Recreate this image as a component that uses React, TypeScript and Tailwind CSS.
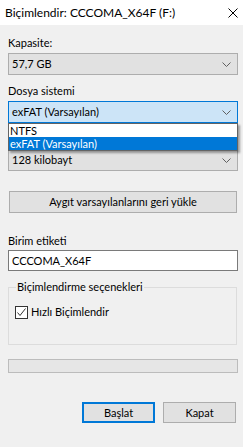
import React from "react";

const Chevron = () => (
  <svg width="9" height="5" viewBox="0 0 9 5" className="shrink-0">
    <path d="M0.5 0.5 L4.5 4.5 L8.5 0.5" fill="none" stroke="#606060" strokeWidth="1" />
  </svg>
);

const Combo = ({ text, active }: { text: string; active?: boolean }) => (
  <div
    className={
      active
        ? "h-[22px] flex items-center justify-between border border-[#0078d7] bg-[#cce4f7] pl-[3px] pr-[6px]"
        : "h-[22px] flex items-center justify-between border border-[#adadad] bg-[#e1e1e1] pl-[3px] pr-[6px]"
    }
  >
    <span className="leading-[14px]">{text}</span>
    <Chevron />
  </div>
);

export default function App() {
  return (
    <div className="w-[243px] h-[447px] bg-[#f0f0f0] text-[11px] text-black overflow-hidden font-[Lato,sans-serif]">
      <div className="h-[25px] bg-white flex items-center justify-between pl-[5px] pr-[5px] text-[12px]">
        <span className="leading-[16px]">Biçimlendir: CCCOMA_X64F (F:)</span>
        <svg width="10" height="10" viewBox="0 0 10 10">
          <path d="M0.5 0.5 L9.5 9.5 M9.5 0.5 L0.5 9.5" stroke="#000" strokeWidth="1" />
        </svg>
      </div>
      <div className="flex flex-col pl-[8px] pr-[5px]">
        <div className="mt-[10px] leading-[16px] h-[16px]">Kapasite:</div>
        <div className="mt-[2px]">
          <Combo text="57,7 GB" />
        </div>
        <div className="mt-[8px] leading-[16px] h-[16px]">Dosya sistemi</div>
        <div className="mt-[2px] relative">
          <Combo text="exFAT (Varsayılan)" active />
          <div className="absolute left-0 right-0 top-[22px] z-10 bg-white border border-[#646464] shadow-[2px_2px_2px_rgba(0,0,0,0.35)]">
            <div className="h-[13px] leading-[13px] pl-[1px]">NTFS</div>
            <div className="h-[13px] leading-[13px] pl-[1px] bg-[#0078d7] text-white">exFAT (Varsayılan)</div>
          </div>
        </div>
        <div className="mt-[8px] h-[16px]" />
        <div className="mt-[2px]">
          <Combo text="128 kilobayt" />
        </div>
        <div className="mt-[20px] ml-[1px] mr-[1px] h-[22px] border border-[#adadad] bg-[#e1e1e1] flex items-center justify-center">
          <span className="leading-[14px]">Aygıt varsayılanlarını geri yükle</span>
        </div>
        <div className="mt-[20px] leading-[16px] h-[16px]">Birim etiketi</div>
        <div className="mt-[1px] h-[21px] border border-[#7a7a7a] bg-white flex items-center pl-[3px]">
          <span className="leading-[14px]">CCCOMA_X64F</span>
        </div>
        <div className="mt-[16px] mr-[1px] h-[58px] border border-[#dcdcdc] relative">
          <span className="absolute left-[7px] top-[-8px] bg-[#f0f0f0] px-[1px] leading-[14px]">
            Biçimlendirme seçenekleri
          </span>
          <div className="mt-[17px] ml-[6px] flex items-center gap-[3px]">
            <div className="w-[13px] h-[13px] border border-[#333333] bg-white flex items-center justify-center">
              <svg width="11" height="11" viewBox="0 0 11 11">
                <path d="M1.5 5.5 L4 8.5 L9.5 1.5" fill="none" stroke="#333" strokeWidth="1" />
              </svg>
            </div>
            <span className="leading-[14px]">Hızlı Biçimlendir</span>
          </div>
        </div>
        <div className="mt-[14px] h-[14px] border border-[#bcbcbc] bg-[#e6e6e6]" />
        <div className="mt-[29px] flex justify-end gap-[8px] pr-[2px]">
          <div className="w-[73px] h-[21px] border-2 border-[#0078d7] bg-[#e1e1e1] flex items-center justify-center">
            <span className="leading-[14px]">Başlat</span>
          </div>
          <div className="w-[73px] h-[21px] border border-[#adadad] bg-[#e1e1e1] flex items-center justify-center">
            <span className="leading-[14px]">Kapat</span>
          </div>
        </div>
      </div>
    </div>
  );
}
